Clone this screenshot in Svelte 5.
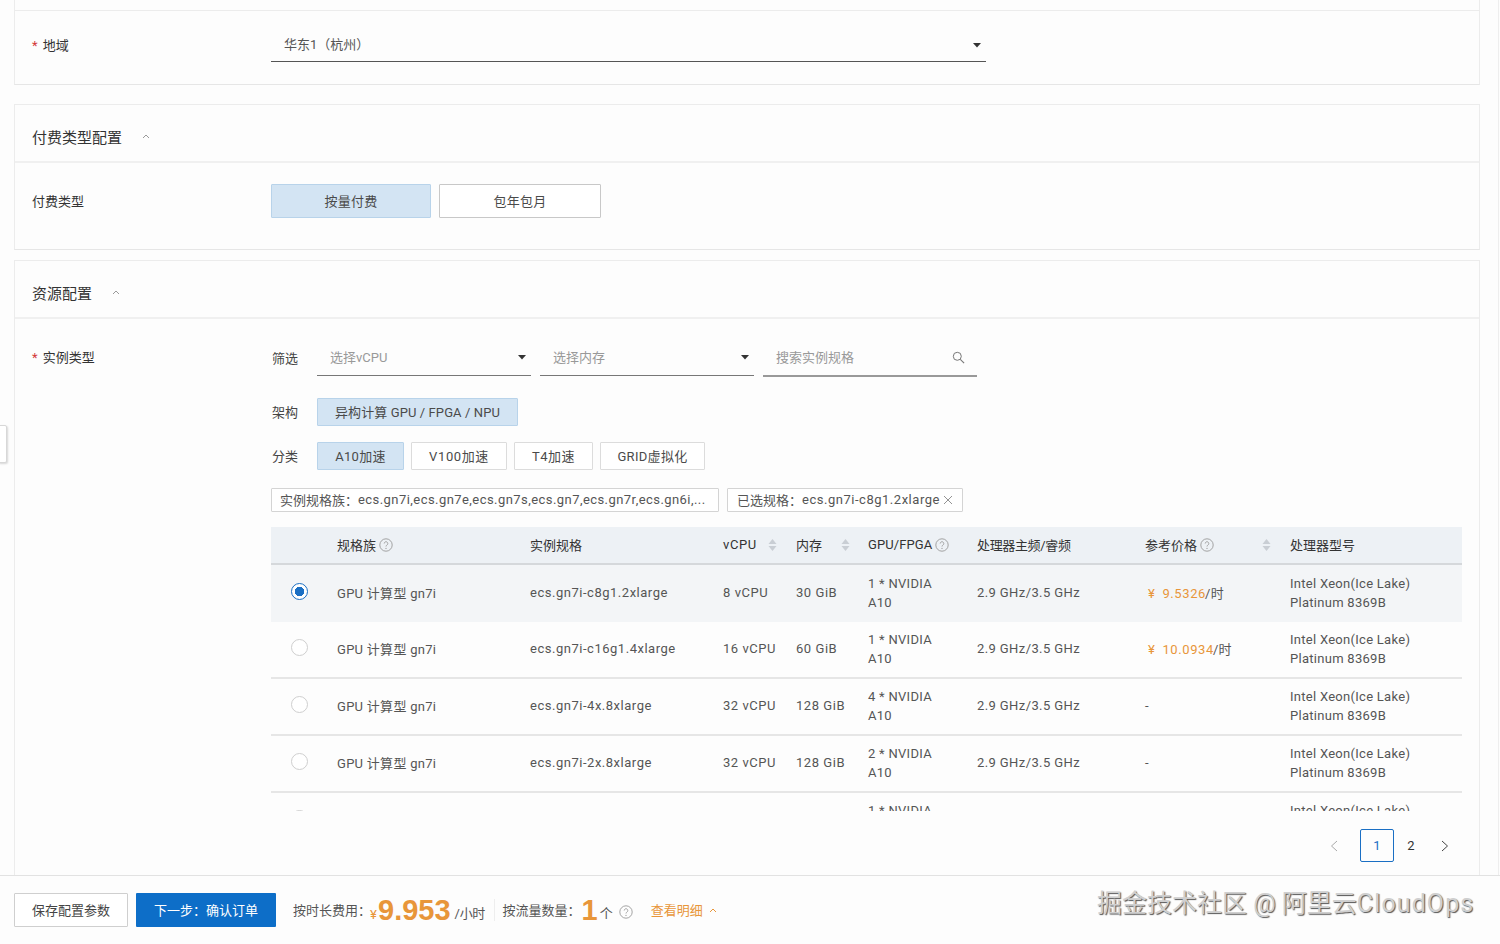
<script>
  const rows = [
    { spec: 'ecs.gn7i-c8g1.2xlarge', cpu: '8 vCPU', mem: '30 GiB', gpu: ['1 * NVIDIA', 'A10'], price: '9.5326', selected: true },
    { spec: 'ecs.gn7i-c16g1.4xlarge', cpu: '16 vCPU', mem: '60 GiB', gpu: ['1 * NVIDIA', 'A10'], price: '10.0934' },
    { spec: 'ecs.gn7i-4x.8xlarge', cpu: '32 vCPU', mem: '128 GiB', gpu: ['4 * NVIDIA', 'A10'] },
    { spec: 'ecs.gn7i-2x.8xlarge', cpu: '32 vCPU', mem: '128 GiB', gpu: ['2 * NVIDIA', 'A10'] },
    { spec: 'ecs.gn7i-c32g1.8xlarge', cpu: '32 vCPU', mem: '128 GiB', gpu: ['1 * NVIDIA', 'A10'] }
  ];
</script>

{#snippet help()}
  <svg class="help" viewBox="0 0 14 14" width="14" height="14" aria-hidden="true">
    <circle cx="7" cy="7" r="6.2" fill="none" stroke="#9a9a9a" stroke-width="0.9" />
    <path d="M5.2 5.5a1.8 1.8 0 1 1 2.7 1.6c-.6.4-.9.7-.9 1.4" fill="none" stroke="#9a9a9a" stroke-width="0.9" />
    <circle cx="7" cy="10.4" r="0.6" fill="#9a9a9a" />
  </svg>
{/snippet}

{#snippet sort()}
  <svg class="sort" viewBox="0 0 9 14" width="9" height="14" aria-hidden="true">
    <path d="M4.5 1 8.5 6H.5z" fill="#c9ced4" />
    <path d="M4.5 13 .5 8h8z" fill="#c9ced4" />
  </svg>
{/snippet}

{#snippet caret()}
  <svg class="caret" viewBox="0 0 8 5" width="8" height="5" aria-hidden="true"><path d="M0 0h8L4 4.5z" fill="#333" /></svg>
{/snippet}

{#snippet up(color)}
  <svg viewBox="0 0 8 5" width="8" height="5" aria-hidden="true"><path d="M1 4 4 1l3 3" fill="none" stroke={color} stroke-width="1" /></svg>
{/snippet}

<div class="page">
  <div class="side-tab"></div>
  <main class="main">
    <section class="card first">
      <div class="row region">
        <div class="label"><span class="req">*</span> 地域</div>
        <div class="select wide"><span class="value">华东1（杭州）</span>{@render caret()}</div>
      </div>
    </section>

    <section class="card pay">
      <header class="head"><h2>付费类型配置</h2><span class="fold f1">{@render up('#9a9a9a')}</span></header>
      <div class="row pay-row">
        <div class="label">付费类型</div>
        <div class="pay-btns">
          <button class="opt big first-btn on">按量付费</button>
          <button class="opt big">包年包月</button>
        </div>
      </div>
    </section>

    <section class="card res">
      <header class="head"><h2>资源配置</h2><span class="fold f2">{@render up('#9a9a9a')}</span></header>
      <div class="row res-row">
        <div class="label top"><span class="req">*</span> 实例类型</div>
        <div class="content">
          <div class="filter">
            <span class="flabel">筛选</span>
            <div class="select small"><span class="ph">选择vCPU</span>{@render caret()}</div>
            <div class="select small"><span class="ph">选择内存</span>{@render caret()}</div>
            <div class="select small search">
              <span class="ph">搜索实例规格</span>
              <svg viewBox="0 0 13 13" width="13" height="13" aria-hidden="true"><circle cx="5.3" cy="5.3" r="4" fill="none" stroke="#777" stroke-width="1" /><path d="m8.3 8.3 3.8 3.8" stroke="#777" stroke-width="1.1" /></svg>
            </div>
          </div>
          <div class="opts arch">
            <span class="flabel">架构</span>
            <button class="opt on">异构计算 GPU / FPGA / NPU</button>
          </div>
          <div class="opts cat">
            <span class="flabel">分类</span>
            <button class="opt c1 on">A10加速</button>
            <button class="opt c2">V100加速</button>
            <button class="opt c3">T4加速</button>
            <button class="opt c4">GRID虚拟化</button>
          </div>
          <div class="tags">
            <span class="tag t1">实例规格族：<span class="latin">ecs.gn7i,ecs.gn7e,ecs.gn7s,ecs.gn7,ecs.gn7r,ecs.gn6i,...</span></span>
            <span class="tag t2">已选规格：<span class="spec">ecs.gn7i-c8g1.2xlarge</span>
              <svg viewBox="0 0 10 10" width="10" height="10" aria-hidden="true"><path d="m1 1 8 8M9 1 1 9" stroke="#888" stroke-width="0.9" /></svg>
            </span>
          </div>

          <div class="table">
            <div class="tr th">
              <div></div>
              <div>规格族 {@render help()}</div>
              <div>实例规格</div>
              <div class="sorted s1">vCPU {@render sort()}</div>
              <div class="sorted s2">内存 {@render sort()}</div>
              <div class="gpuh">GPU/FPGA {@render help()}</div>
              <div class="freq">处理器主频/睿频</div>
              <div class="sorted s3"><span>参考价格 {@render help()}</span>{@render sort()}</div>
              <div>处理器型号</div>
            </div>
            {#each rows as r}
              <div class="tr td" class:sel={r.selected}>
                <div class="radio-cell"><span class="radio" class:checked={r.selected}></span></div>
                <div class="cell">GPU 计算型 gn7i</div>
                <div class="cell spec">{r.spec}</div>
                <div class="cell nums">{r.cpu}</div>
                <div class="cell nums">{r.mem}</div>
                <div class="cell two">{r.gpu[0]}<br />{r.gpu[1]}</div>
                <div class="cell ghz">2.9 GHz/3.5 GHz</div>
                <div class="cell">
                  {#if r.price}<span class="price"><span class="rmb">¥</span>{r.price}</span>/时{:else}-{/if}
                </div>
                <div class="cell two">Intel Xeon(Ice Lake)<br />Platinum 8369B</div>
              </div>
            {/each}
          </div>

          <nav class="pager">
            <svg viewBox="0 0 8 12" width="8" height="12" aria-hidden="true"><path d="M7 1 1.5 6 7 11" fill="none" stroke="#aaa" stroke-width="1" /></svg>
            <span class="pg cur">1</span>
            <span class="pg">2</span>
            <svg viewBox="0 0 8 12" width="8" height="12" aria-hidden="true"><path d="M1 1l5.5 5L1 11" fill="none" stroke="#444" stroke-width="1" /></svg>
          </nav>
        </div>
      </div>
    </section>
  </main>

  <footer class="foot">
    <button class="fbtn save">保存配置参数</button>
    <button class="fbtn next">下一步：确认订单</button>
    <span class="ft fw">按时长费用：</span>
    <span class="yen">¥</span><span class="num">9.953</span>
    <span class="ft unit">/小时</span>
    <span class="sep"></span>
    <span class="ft fw">按流量数量：</span>
    <span class="num one">1</span>
    <span class="ft ge">个</span>
    <span class="fh">{@render help()}</span>
    <span class="detail">查看明细</span>
    <span class="dcar">{@render up('#e8963a')}</span>
  </footer>

  <div class="mark">掘金技术社区 @ 阿里云<span class="mark-latin">CloudOps</span></div>
</div>

<style>
  :global(body) {
    margin: 0;
    background: #fdfdfd;
    font-family: Roboto, "Noto Sans CJK SC", sans-serif;
    font-size: 13px;
    color: #4a4a4a;
  }
  .page {
    position: relative;
    width: 1500px;
    height: 944px;
    overflow: hidden;
    display: flex;
    flex-direction: column;
  }
  .side-tab {
    position: absolute;
    left: -2px;
    top: 425px;
    width: 7px;
    height: 36px;
    background: #fff;
    border: 1px solid #d8d8d8;
    box-shadow: 1px 1px 2px rgba(0, 0, 0, 0.15);
    border-radius: 0 2px 2px 0;
  }
  .main {
    width: 1499px;
    height: 876px;
    padding: 0 18px 0 14px;
    box-sizing: border-box;
    border-right: 1px solid #eee;
    flex: none;
  }
  .main::after {
    content: "";
    display: block;
    width: 1500px;
    margin-left: -14px;
    border-bottom: 1px solid #e2e2e2;
  }
  .card {
    border: 1px solid #ececec;
    background: #fdfdfd;
    box-sizing: border-box;
  }
  .first {
    height: 85px;
    border-top: 0;
    padding-top: 10px;
    border-bottom: 1px solid #e6e6e6;
  }
  .pay {
    margin-top: 19px;
    height: 146px;
    border-bottom-color: #e6e6e6;
  }
  .res {
    margin-top: 10px;
    height: 615px;
    border-bottom: 0;
  }
  .row {
    display: flex;
    padding-left: 17px;
  }
  .region {
    border-top: 1px solid #ececec;
    height: 73px;
    box-sizing: border-box;
    padding-top: 18px;
  }
  .label {
    width: 239px;
    flex: none;
    color: #333;
    line-height: 33px;
  }
  .label.top {
    line-height: 20px;
    padding-top: 29px;
  }
  .pay-row .label { line-height: 35px; }
  .req { color: #d33a3a; margin-right: 2px; }
  .select {
    display: flex;
    align-items: center;
    justify-content: space-between;
    box-sizing: border-box;
    border-bottom: 1px solid #555;
  }
  .select svg { flex: none; }
  .wide {
    width: 715px;
    height: 33px;
    padding: 0 5px 2px 13px;
  }
  .wide svg { margin-top: 2px; }
  .value { margin-top: -2px; color: #555; }
  .head {
    height: 58px;
    display: flex;
    align-items: center;
    padding-left: 17px;
    padding-top: 6px;
    box-sizing: border-box;
    border-bottom: 2px solid #f0f0f0;
  }
  h2 {
    margin: 0;
    font-size: 15px;
    font-weight: 400;
    color: #333;
  }
  .fold { display: flex; margin-top: 1px; }
  .f1 { margin-left: 20px; }
  .f2 { margin-left: 20px; }
  .pay-row { padding-top: 21px; }
  .pay-btns { display: flex; gap: 8px; }
  .opt {
    box-sizing: border-box;
    height: 28px;
    padding: 0 0 2px;
    font: inherit;
    letter-spacing: 0.3px;
    color: #4a4a4a;
    background: #fff;
    border: 1px solid #dcdcdc;
    border-radius: 1px;
  }
  .opt.on {
    background: #d3e4f3;
    border-color: #b8d3ea;
  }
  .arch .opt { width: 201px; letter-spacing: 0.1px; }
  .c1 { width: 87px; }
  .c2 { width: 96px; letter-spacing: 0.6px; }
  .c3 { width: 79px; letter-spacing: 0.5px; }
  .c4 { width: 105px; }
  .opt.big {
    width: 162px;
    height: 34px;
    border-color: #c8c8c8;
  }
  .opt.big.first-btn { width: 160px; border-color: #b8d3ea; }
  .content {
    width: 1191px;
    flex: none;
  }
  .res-row { height: 555px; }
  .flabel {
    width: 46px;
    flex: none;
    color: #444;
    padding-left: 1px;
    box-sizing: border-box;
  }
  .filter {
    display: flex;
    gap: 9px;
    align-items: center;
    height: 38px;
    margin-top: 19px;
  }
  .filter .flabel { margin-right: -9px; }
  .small {
    width: 214px;
    height: 38px;
    padding: 0 9px 0 13px;
    border-bottom: 1px solid #777;
  }
  .small svg { margin-top: 2px; }
  .small svg.caret { margin-right: -4px; }
  .search { border-bottom-width: 2px; border-bottom-color: #999; height: 39px; margin-top: 1px; padding-right: 12px; }
  .ph { color: #999; }
  .opts {
    display: flex;
    align-items: center;
    gap: 7px;
  }
  .opts .flabel { margin-right: -7px; padding-bottom: 2px; }
  .arch { margin-top: 22px; }
  .cat { margin-top: 16px; }
  .tags {
    display: flex;
    gap: 8px;
    margin-top: 18px;
  }
  .tag {
    display: flex;
    align-items: center;
    box-sizing: border-box;
    height: 24px;
    padding: 0 8px 2px;
    white-space: nowrap;
    color: #555;
    border: 1px solid #d4d4d4;
    border-radius: 1px;
    background: #fff;
  }
  .latin { letter-spacing: 0.44px; }
  .spec { letter-spacing: 0.52px; }
  .t1 { width: 448px; }
  .t2 { width: 236px; padding-left: 9px; }
  .t2 svg { margin: 2px 0 0 3px; }
  .table {
    margin-top: 15px;
    height: 284px;
    overflow: hidden;
  }
  .tr {
    display: grid;
    grid-template-columns: 66px 193px 193px 73px 72px 109px 168px 145px 172px;
    align-items: center;
    box-sizing: border-box;
  }
  .th {
    height: 38px;
    padding-bottom: 1px;
    background: #edf1f5;
    border-bottom: 2px solid #d5d8db;
    color: #333;
  }
  .th > div { display: flex; align-items: center; gap: 3px; }
  .th .help { margin-top: 1px; }
  .sorted.s1 { gap: 11px; letter-spacing: 0.6px; }
  .sorted.s2 { gap: 19px; }
  .gpuh { letter-spacing: 0.1px; }
  .freq { letter-spacing: -0.35px; }
  .sorted.s3 { justify-content: space-between; padding-right: 19px; }
  .sorted.s3 span { display: flex; align-items: center; gap: 3px; }
  .td {
    height: 57px;
    border-bottom: 2px solid #e6e6e6;
    color: #555;
    letter-spacing: 0.28px;
  }
  .cell { padding-bottom: 2px; }
  .td .spec { letter-spacing: 0.52px; }
  .td .nums { letter-spacing: 0.55px; }
  .td .ghz { letter-spacing: 0.4px; }
  .td.sel {
    background: #f3f5f7;
    border-bottom: 0;
  }
  .two { line-height: 19px; }
  .radio-cell { padding-left: 20px; display: flex; padding-bottom: 4px; }
  .radio {
    width: 17px;
    height: 17px;
    box-sizing: border-box;
    border-radius: 50%;
    border: 1px solid #cfcfcf;
    background: #fff;
  }
  .radio.checked {
    border: 1.5px solid #1a6fc4;
    background: radial-gradient(circle, #1a6fc4 0 4.5px, #fff 5px);
  }
  .price { color: #e8963a; letter-spacing: 0.6px; padding-left: 3px; margin-right: -1px; }
  .rmb { margin-right: 7px; }
  .pager {
    display: flex;
    align-items: center;
    justify-content: flex-end;
    margin-top: 18px;
    padding-right: 13px;
    height: 33px;
  }
  .pager svg:first-child { margin-right: 22px; }
  .pg {
    width: 34px;
    height: 33px;
    line-height: 33px;
    text-align: center;
    box-sizing: border-box;
    color: #333;
  }
  .pg.cur {
    line-height: 31px;
    color: #1a6fc4;
    border: 1px solid #1a6fc4;
    border-radius: 2px;
  }
  .pg + .pg { margin: 0 13px 0 0; }
  .foot {
    flex: 1;
    display: flex;
    align-items: center;
    padding: 0 0 0 14px;
    color: #555;
  }
  .fbtn {
    box-sizing: border-box;
    height: 34px;
    padding: 0 0 2px;
    font: inherit;
    border-radius: 1px;
  }
  .save {
    width: 114px;
    background: #fff;
    color: #444;
    border: 1px solid #cfcfcf;
    margin-right: 8px;
  }
  .next {
    width: 140px;
    background: #0d6ec8;
    color: #fff;
    border: 0;
    margin-right: 17px;
  }
  .ft { white-space: nowrap; }
  .fw { width: 77px; flex: none; margin-top: -2px; }
  .yen { width: 8px; color: #e8963a; font-size: 13px; padding-top: 8px; }
  .num {
    font-family: "Liberation Sans", sans-serif;
    font-weight: 700;
    font-size: 29px;
    line-height: 34px;
    color: #e8963a;
  }
  .unit { margin-left: 4px; padding-top: 4px; width: 29px; letter-spacing: -0.3px; }
  .sep {
    width: 1px;
    height: 22px;
    background: #eee;
    margin: 0 8px 0 10px;
  }
  .one { margin: 0 0 0 2px; }
  .ge { margin-left: 2px; padding-top: 4px; margin-right: -1px; }
  .fh { display: flex; margin: 4px 0 0 7px; }
  .detail { color: #e8963a; margin-left: 18px; margin-top: -1px; }
  .dcar { display: flex; margin-left: 6px; }
  .mark {
    position: absolute;
    left: 1097px;
    top: 886px;
    font-size: 25px;
    line-height: 36px;
    white-space: nowrap;
    color: #cfcfcf;
    text-shadow: 1px 1px 1px #555;
  }
  .mark-latin { letter-spacing: 1.1px; }
</style>
